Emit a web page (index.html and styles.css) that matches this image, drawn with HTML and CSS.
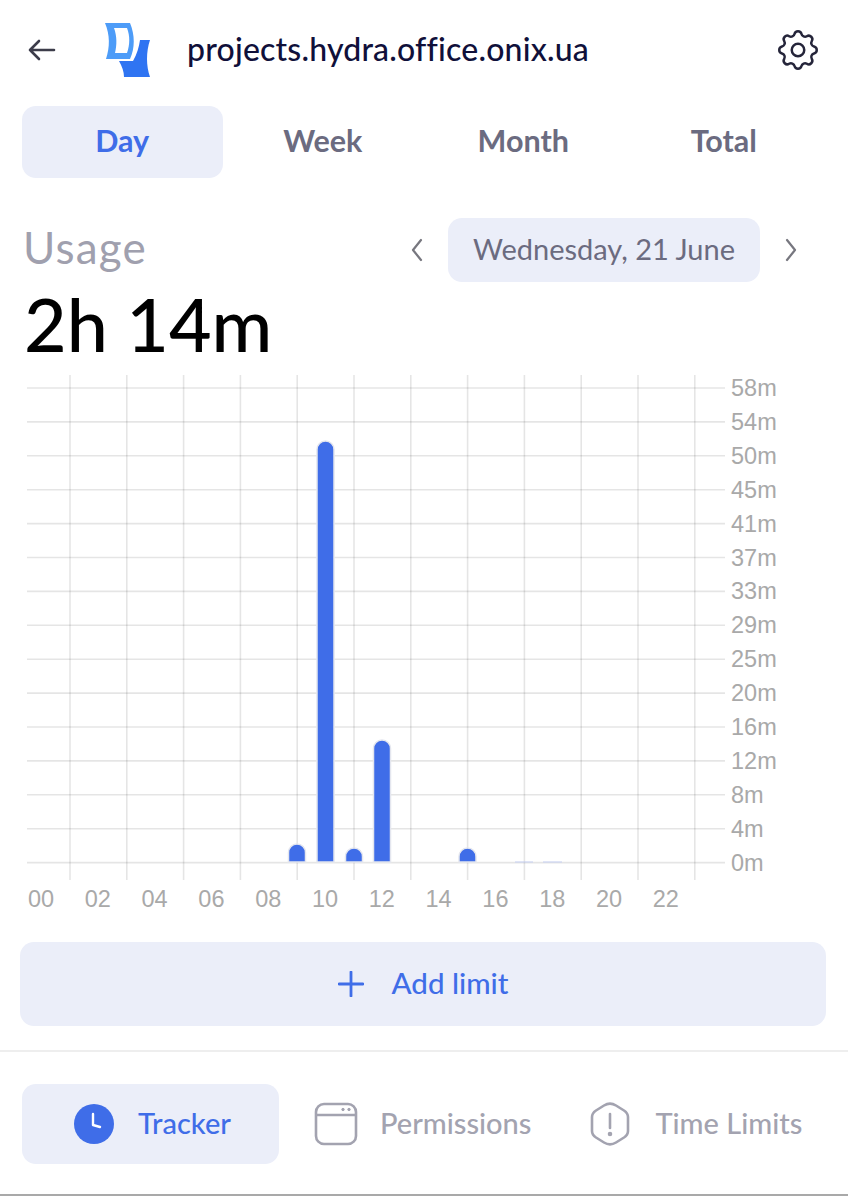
FILE: index.html
```html
<!DOCTYPE html>
<html lang="en">
<head>
	<meta charset="UTF-8">
	<title>Usage</title>
	<link rel="stylesheet" href="styles.css">
</head>
<body>
	<div class="page">
		<div class="top">
			<svg class="back" viewBox="0 0 28 24" fill="none" stroke="#3c3c4a" stroke-width="2.6" stroke-linecap="round" stroke-linejoin="round"><path d="M2 12H26M11 3L2 12L11 21"/></svg>
			<svg class="logo" viewBox="0 0 48 56"><path fill="#4d9cf8" fill-rule="evenodd" d="M1 1H26C31 13 31 26 26 37H2C6 25 6 13 1 1ZM10 6C13 14 13 23 11 31H23C26 22 26 14 23 6Z"/><path fill="#2f74f2" d="M36 18H46C42 30 42 44 46 55H20C20 50 18 44 15 39H29C33 32 35 25 36 18Z"/></svg>
			<div class="site">projects.hydra.office.onix.ua</div>
			<svg class="gear" viewBox="0 0 24 24" fill="none" stroke="#25253a" stroke-width="1.2" stroke-linecap="round" stroke-linejoin="round"><circle cx="12" cy="12" r="3"/><path d="M10.325 4.317c.426-1.756 2.924-1.756 3.35 0a1.724 1.724 0 002.573 1.066c1.543-.94 3.31.826 2.37 2.37a1.724 1.724 0 001.065 2.572c1.756.426 1.756 2.924 0 3.35a1.724 1.724 0 00-1.066 2.573c.94 1.543-.826 3.31-2.37 2.37a1.724 1.724 0 00-2.572 1.065c-.426 1.756-2.924 1.756-3.35 0a1.724 1.724 0 00-2.573-1.066c-1.543.94-3.31-.826-2.37-2.37a1.724 1.724 0 00-1.065-2.572c-1.756-.426-1.756-2.924 0-3.35a1.724 1.724 0 001.066-2.573c-.94-1.543.826-3.31 2.37-2.37.996.608 2.296.07 2.572-1.065z"/></svg>
		</div>

		<div class="periods">
			<div class="period on">Day</div>
			<div class="period">Week</div>
			<div class="period">Month</div>
			<div class="period">Total</div>
		</div>

		<div class="usage_row">
			<div class="usage">Usage</div>
			<div class="dates">
				<svg class="chev" viewBox="0 0 14 24" fill="none" stroke="#77777f" stroke-width="2.2" stroke-linecap="round" stroke-linejoin="round"><path d="M11 2L3 12L11 22"/></svg>
				<div class="date">Wednesday, 21 June</div>
				<svg class="chev" viewBox="0 0 14 24" fill="none" stroke="#77777f" stroke-width="2.2" stroke-linecap="round" stroke-linejoin="round"><path d="M3 2L11 12L3 22"/></svg>
			</div>
		</div>
		<div class="total">2h 14m</div>

		<svg class="chart" id="chart" width="848" height="546" viewBox="0 370 848 546"></svg>

		<div class="add">
			<svg class="plus" viewBox="0 0 26 26" fill="none" stroke="#3f6de8" stroke-width="2.8" stroke-linecap="round"><path d="M13 1V25M1 13H25"/></svg>
			<span>Add limit</span>
		</div>

		<div class="nav">
			<div class="nav_item on">
				<svg class="nav_icon" width="42" height="42" viewBox="0 0 42 42"><circle cx="21" cy="21" r="20" fill="#3f6de8"/><path d="M20 11V22L27 24" fill="none" stroke="#fff" stroke-width="2.4" stroke-linecap="round" stroke-linejoin="round"/></svg>
				<span>Tracker</span>
			</div>
			<div class="nav_item">
				<svg class="nav_icon" width="44" height="44" viewBox="0 0 44 44" fill="none" stroke="#a3a3b0" stroke-width="2.6"><rect x="2" y="2" width="40" height="40" rx="8"/><path d="M2 13H42"/><circle cx="29" cy="7.5" r="1.2" fill="#a3a3b0" stroke-width="1"/><circle cx="35" cy="7.5" r="1.2" fill="#a3a3b0" stroke-width="1"/></svg>
				<span>Permissions</span>
			</div>
			<div class="nav_item">
				<svg class="nav_icon" width="40" height="44" viewBox="0 0 40 44" fill="none" stroke="#a3a3b0" stroke-width="2.6" stroke-linecap="round" stroke-linejoin="round"><path d="M14 3.5C18 1 22 1 26 3.5L34 8.5C37 10.500 38 12 38 15V29C38 32 37 33.500 34 35.500L26 40.500C22 43 18 43 14 40.500L6 35.500C3 33.500 2 32 2 29V15C2 12 3 10.500 6 8.500Z"/><path d="M20 12V26"/><circle cx="20" cy="32" r="1" fill="#a3a3b0"/></svg>
				<span>Time Limits</span>
			</div>
		</div>
	</div>

	<script type="text/javascript">
		var svg = document.getElementById("chart");
		var ys = ["58m","54m","50m","45m","41m","37m","33m","29m","25m","20m","16m","12m","8m","4m","0m"];
		var html = "";

		// grid
		for (var i = 0; i < ys.length; i++) {
			var y = 388 + i * 33.9;
			html += '<line class="grid" x1="27" x2="725" y1="' + y + '" y2="' + y + '"/>';
			html += '<text class="tick" x="731" y="' + (y + 8) + '">' + ys[i] + '</text>';
		}
		for (var i = 0; i < 12; i++) {
			var x = 70 + i * 56.8;
			html += '<line class="grid" x1="' + x + '" x2="' + x + '" y1="375" y2="880"/>';
			var label = (i * 2 < 10 ? "0" : "") + (i * 2);
			html += '<text class="tick mid" x="' + (41 + i * 56.8) + '" y="907">' + label + '</text>';
		}

		// bars: center x, top y
		var bars = [[297,844],[325.500,441],[354,848],[382,740],[467.500,848]];
		for (var i = 0; i < bars.length; i++) {
			var bx = bars[i][0] - 8.5, by = bars[i][1];
			html += '<path class="bar" d="M' + bx + ' 862V' + (by + 8.5) + 'a8.5 8.5 0 0 1 17 0V862Z"/>';
		}
		html += '<line class="tiny" x1="515" x2="533" y1="862" y2="862"/><line class="tiny" x1="543" x2="562" y1="862" y2="862"/>';
		svg.innerHTML = html;
	</script>
</body>
</html>
```

FILE: styles.css
```css
* {
	margin: 0;
	padding: 0;
	box-sizing: border-box;
}

body {
	background: #fff;
	font-family: "Lato", "Noto Sans", sans-serif;
}

.page {
	width: 848px;
	height: 1196px;
	border-bottom: 2px solid #a9a9a9;
	overflow: hidden;
}

.top {
	display: flex;
	align-items: center;
	height: 106px;
	padding: 0 25px 6px 28px;
}

.back {
	width: 28px;
	height: 24px;
	margin-right: 48px;
}

.logo {
	width: 48px;
	height: 56px;
	margin-right: 35px;
}

.site {
	flex: 1;
	padding-bottom: 3px;
	font-size: 32px;
	font-weight: 500;
	letter-spacing: 0.2px;
	color: #10103a;
}

.gear {
	width: 50px;
	height: 50px;
}

.periods {
	display: grid;
	grid-template-columns: repeat(4, 1fr);
	margin: 0 24px 0 22px;
}

.period {
	height: 72px;
	line-height: 68px;
	text-align: center;
	font-size: 30.5px;
	font-weight: 700;
	color: #6b6b80;
	border-radius: 14px;
}

.period.on {
	background: #ebeef9;
	color: #3f6de8;
}

.usage_row {
	display: flex;
	justify-content: space-between;
	align-items: center;
	margin-top: 40px;
	height: 64px;
	padding: 0 50px 0 23px;
}

.usage {
	padding-bottom: 6px;
	font-size: 44px;
	letter-spacing: 1.2px;
	color: #a0a0ae;
}

.dates {
	display: flex;
	align-items: center;
}

.chev {
	width: 14px;
	height: 24px;
}

.date {
	width: 312px;
	height: 64px;
	line-height: 62px;
	margin: 0 24px;
	text-align: center;
	font-size: 29px;
	color: #6b6b80;
	background: #ebeef9;
	border-radius: 14px;
}

.total {
	height: 88px;
	line-height: 84px;
	padding-left: 24px;
	font-size: 73.5px;
	font-weight: 500;
	color: #000;
}

.chart {
	display: block;
}

.grid {
	stroke: rgba(0, 0, 0, 0.1);
	stroke-width: 1.6;
}

.tick {
	font-family: "Liberation Sans", sans-serif;
	font-size: 23.5px;
	fill: #a9a9a9;
}

.tick.mid {
	text-anchor: middle;
}

.bar {
	fill: #3f6de8;
	stroke: #e4e6ee;
	stroke-width: 1.500;
}

.tiny {
	stroke: #c5cff2;
	stroke-width: 1;
}

.add {
	display: flex;
	align-items: center;
	justify-content: center;
	gap: 28px;
	height: 84px;
	margin: 26px 22px 0 20px;
	font-size: 29.5px;
	font-weight: 500;
	color: #3f6de8;
	background: #ebeef9;
	border-radius: 14px;
}

.add span {
	padding-bottom: 3px;
}

.plus {
	width: 26px;
	height: 26px;
}

.nav {
	display: flex;
	align-items: center;
	height: 145px;
	margin-top: 24px;
	padding-left: 22px;
	border-top: 2px solid #eeeeee;
	font-size: 29px;
	font-weight: 500;
	color: #a3a3b0;
}

.nav_item {
	display: flex;
	align-items: center;
	gap: 23px;
	height: 80px;
}

.nav_item span {
	padding-bottom: 2px;
}

.nav_item:nth-child(1) {
	width: 257px;
	padding-left: 51px;
	gap: 23px;
	color: #3f6de8;
	background: #ebeef9;
	border-radius: 14px;
}

.nav_item:nth-child(2) {
	margin-left: 35px;
	gap: 22px;
}

.nav_item:nth-child(3) {
	margin-left: 59px;
	gap: 25px;
}
```
